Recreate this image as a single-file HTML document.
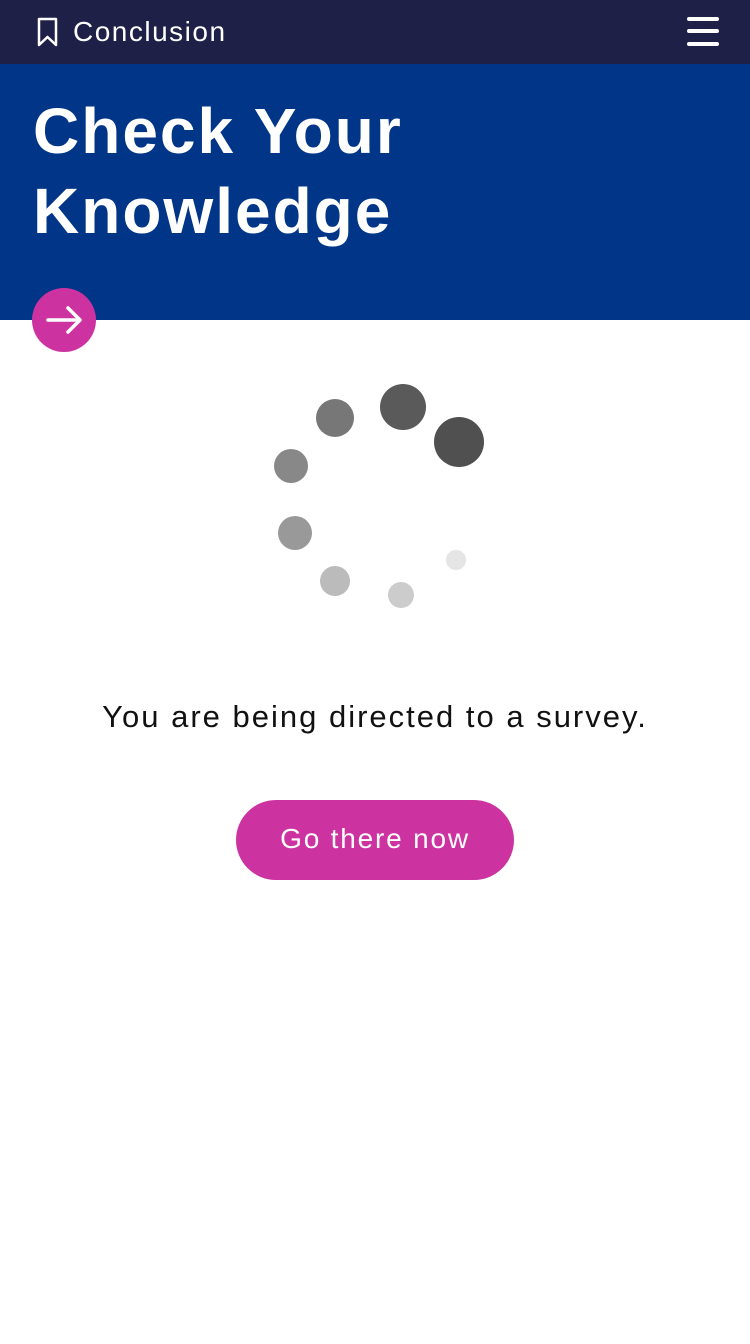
<!DOCTYPE html>
<html><head><style>
body{margin:0;width:750px;height:1344px;background:#fff;font-family:"Liberation Sans",sans-serif;position:relative;overflow:hidden}
.top{position:absolute;left:0;top:0;width:750px;height:64px;background:#1f2048}
.top .t{position:absolute;left:73px;top:14px;color:#fff;font-size:28px;line-height:36px;letter-spacing:1.5px}
.hero{position:absolute;left:0;top:64px;width:750px;height:256px;background:#003587}
.hero h1{position:absolute;left:33px;top:27px;margin:0;color:#fff;font-size:64px;line-height:80px;font-weight:bold;letter-spacing:2px}
.arrow{position:absolute;left:32px;top:288px;width:64px;height:64px;border-radius:50%;background:#cc33a0}
.dot{position:absolute;border-radius:50%}
.msg{position:absolute;left:0;width:750px;top:697px;text-align:center;font-size:31px;line-height:40px;color:#111;letter-spacing:2px}
.btn{position:absolute;left:236px;top:800px;width:278px;height:80px;border-radius:40px;background:#cc33a0;color:#fff;font-size:28px;line-height:78px;text-align:center;letter-spacing:1.8px}
</style></head><body>
<div class="top">
<svg style="position:absolute;left:36px;top:17px" width="24" height="30" viewBox="0 0 24 30"><path d="M3 2h17v26l-8.5-8L3 28z" fill="none" stroke="#fff" stroke-width="2.5" stroke-linejoin="round"/></svg>
<div class="t">Conclusion</div>
<svg style="position:absolute;left:687px;top:16px" width="32" height="32" viewBox="0 0 32 32"><g stroke="#fff" stroke-width="4" stroke-linecap="round"><path d="M2 3h28M2 15h28M2 28h28"/></g></svg>
</div>
<div class="hero"><h1>Check Your<br>Knowledge</h1></div>
<div class="arrow"><svg width="64" height="64" viewBox="0 0 64 64"><g fill="none" stroke="#fff" stroke-width="3.5" stroke-linecap="round" stroke-linejoin="round"><path d="M47 32H16M36 20l12 12-12 12"/></g></svg></div>
<div class="dot" style="left:380px;top:384px;width:46px;height:46px;background:#5a5a5a"></div>
<div class="dot" style="left:434px;top:417px;width:50px;height:50px;background:#505050"></div>
<div class="dot" style="left:316px;top:399px;width:38px;height:38px;background:#777"></div>
<div class="dot" style="left:274px;top:449px;width:34px;height:34px;background:#888"></div>
<div class="dot" style="left:278px;top:516px;width:34px;height:34px;background:#999"></div>
<div class="dot" style="left:320px;top:566px;width:30px;height:30px;background:#bbb"></div>
<div class="dot" style="left:388px;top:582px;width:26px;height:26px;background:#ccc"></div>
<div class="dot" style="left:446px;top:550px;width:20px;height:20px;background:#e5e5e5"></div>
<div class="msg">You are being directed to a survey.</div>
<div class="btn">Go there now</div>
</body></html>
